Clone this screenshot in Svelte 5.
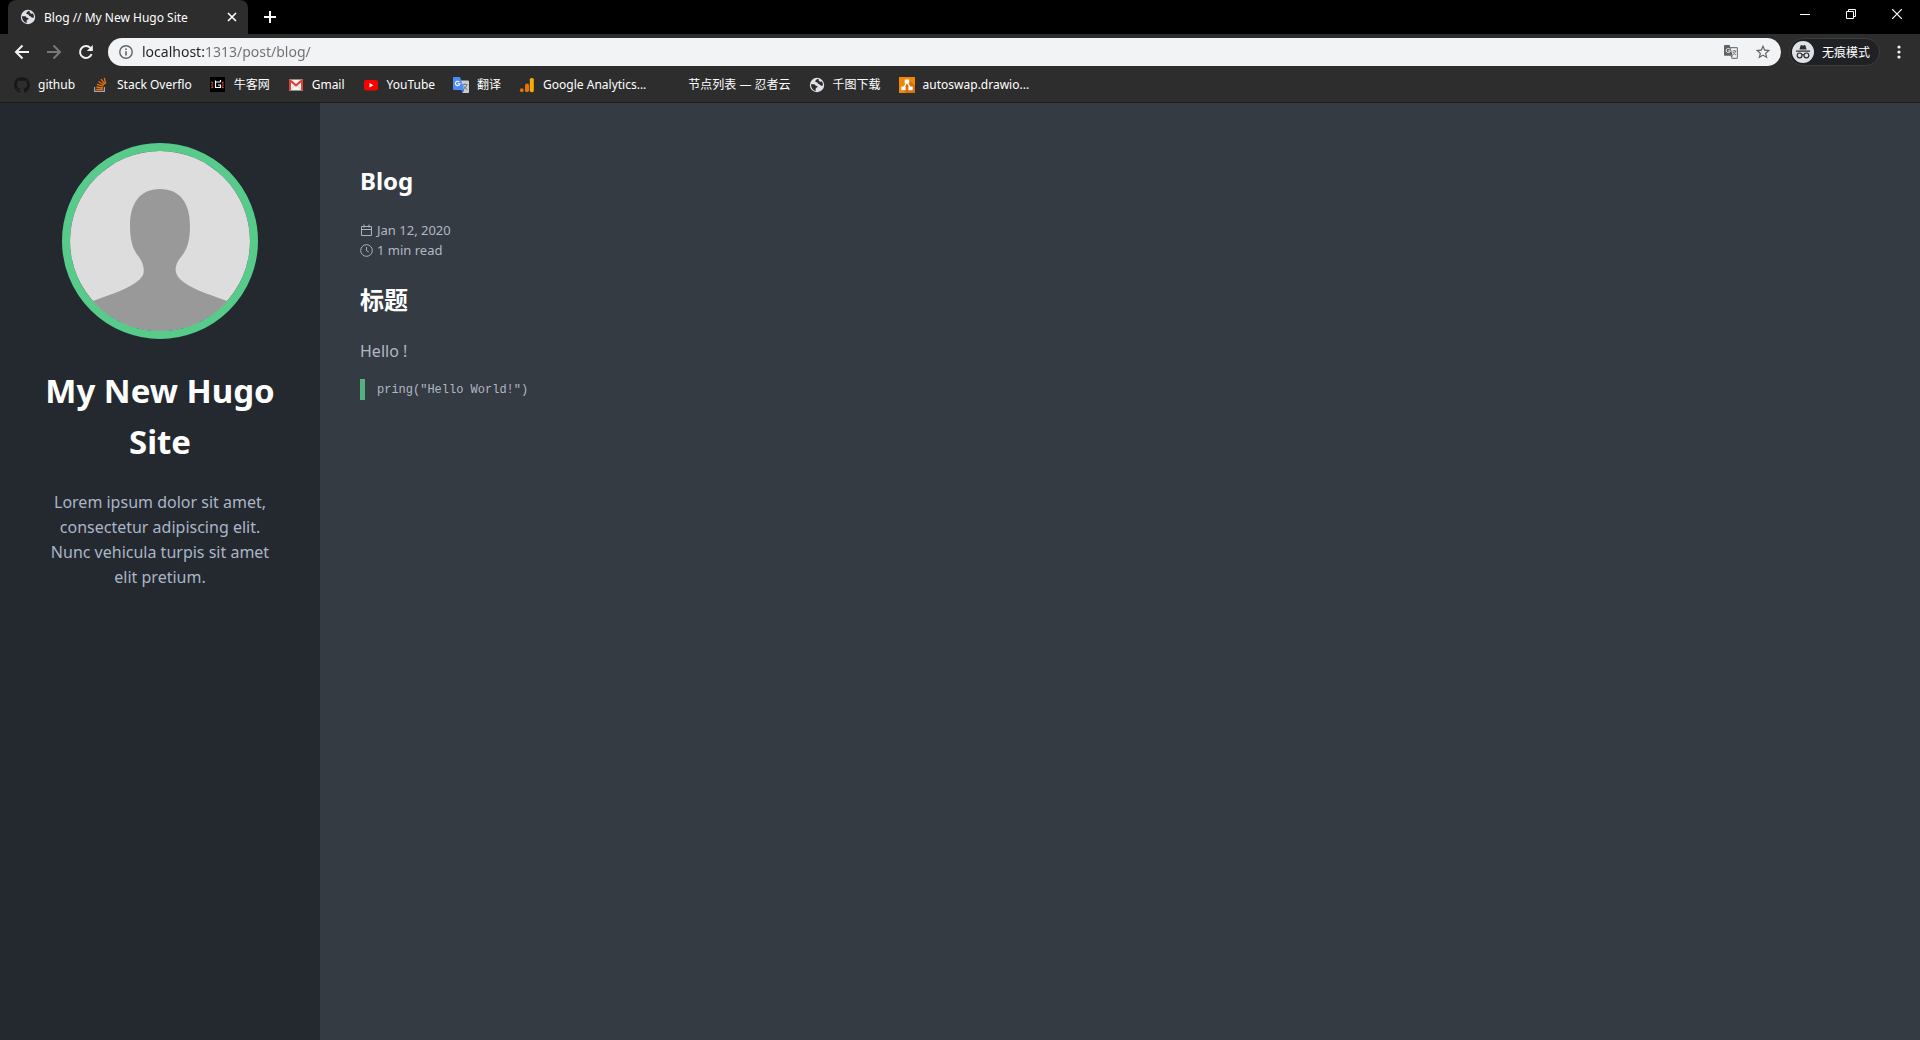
<script lang="ts">
  type Bookmark = { icon: string; label: string };

  const bookmarks: Bookmark[] = [
    { icon: 'github', label: 'github' },
    { icon: 'stack', label: 'Stack Overflo' },
    { icon: 'nowcoder', label: '牛客网' },
    { icon: 'gmail', label: 'Gmail' },
    { icon: 'youtube', label: 'YouTube' },
    { icon: 'translate', label: '翻译' },
    { icon: 'analytics', label: 'Google Analytics...' },
    { icon: 'blank', label: '节点列表 — 忍者云' },
    { icon: 'globe', label: '千图下载' },
    { icon: 'drawio', label: 'autoswap.drawio...' },
  ];

  let url = 'localhost:1313/post/blog/';
</script>

<div class="browser">
  <!-- Tab strip -->
  <div class="tab-strip">
    <div class="tab">
      <svg class="globe" width="16" height="16" viewBox="0 0 16 16">
        <circle cx="8" cy="8" r="7.2" fill="#dee1e6" />
        <path d="M1.8 7.3 L5.6 7.3 Q6.3 9.3 8.3 9 L8.6 10.2 Q6.6 10.6 6.7 11.6 L6.7 14 Q2.4 13 1.8 7.3Z M8.3 2 Q6.2 3.2 6.2 4.6 Q7 5.6 8.2 5.2 Q9 7 10.4 7.3 Q11 9 14 8.6 Q14 6 12.8 4.3 Q11.6 5.4 10.5 4.2 Q9.4 4.1 9.8 2.2Z" fill="#2d2d2d" />
      </svg>
      <span class="tab-title">Blog // My New Hugo Site</span>
      <button class="plain tab-close" aria-label="Close tab">
        <svg width="10" height="10" viewBox="0 0 10 10" stroke="#fff" stroke-width="1.6">
          <path d="M1 1 L9 9 M9 1 L1 9" />
        </svg>
      </button>
    </div>
    <button class="plain new-tab" aria-label="New tab">
      <svg width="12" height="12" viewBox="0 0 12 12" stroke="#fff" stroke-width="2">
        <path d="M6 0 V12 M0 6 H12" />
      </svg>
    </button>
    <div class="window-controls">
      <button class="plain" aria-label="Minimize">
        <svg width="10" height="10" viewBox="0 0 10 10" stroke="#fff"><path d="M0 5.5 H10" /></svg>
      </button>
      <button class="plain" aria-label="Restore">
        <svg width="10" height="10" viewBox="0 0 10 10" fill="none" stroke="#fff">
          <path d="M0.5 2.5 H7.5 V9.5 H0.5Z M2.5 2.5 V0.5 H9.5 V7.5 H7.5" />
        </svg>
      </button>
      <button class="plain" aria-label="Close">
        <svg width="10" height="10" viewBox="0 0 10 10" stroke="#fff" stroke-width="1.2">
          <path d="M0 0 L10 10 M10 0 L0 10" />
        </svg>
      </button>
    </div>
  </div>

  <!-- Toolbar -->
  <div class="toolbar">
    <button class="plain nav" aria-label="Back">
      <svg width="16" height="16" viewBox="0 0 16 16" fill="none" stroke="#f1f3f4" stroke-width="2">
        <path d="M15 8 H2.5 M8.5 1.5 L2 8 L8.5 14.5" />
      </svg>
    </button>
    <button class="plain nav" aria-label="Forward">
      <svg width="16" height="16" viewBox="0 0 16 16" fill="none" stroke="#77787a" stroke-width="2">
        <path d="M1 8 H13.5 M7.5 1.5 L14 8 L7.5 14.5" />
      </svg>
    </button>
    <button class="plain nav" aria-label="Reload">
      <svg width="16" height="16" viewBox="0 0 16 16" fill="none" stroke="#f1f3f4" stroke-width="2">
        <path d="M13.6 10.2 A6 6 0 1 1 12.4 3.9" />
        <path d="M14.8 1 V7 H8.8Z" fill="#f1f3f4" stroke="none" />
      </svg>
    </button>

    <div class="omnibox">
      <svg width="14" height="14" viewBox="0 0 14 14" fill="none" stroke="#5f6368" stroke-width="1.4">
        <circle cx="7" cy="7" r="6.2" />
        <path d="M7 6.2 V10.5 M7 3.4 V5" stroke-width="1.6" />
      </svg>
      <input class="url" type="text" aria-label="Address" spellcheck="false" bind:value={url} />
      <button class="plain" aria-label="Translate this page">
        <svg width="14" height="14" viewBox="0 0 14 14">
          <path d="M6 2.6 H12.8 Q13.4 2.6 13.4 3.2 V12.8 Q13.4 13.4 12.8 13.4 H7.6" fill="none" stroke="#777a7e" stroke-width="1.1" />
          <path d="M1 0 H5.6 L8.8 10.8 H1 Q0 10.8 0 9.8 V1 Q0 0 1 0Z" fill="#5f6368" />
          <path d="M6 4.4 A2.1 2.1 0 1 0 6.3 5.9 H4.2" fill="none" stroke="#f1f3f4" stroke-width="1" />
          <path d="M8.4 6 H12.4 M10.3 5 V6 M11.8 6 Q11 8.8 8.8 9.8 M9 7 Q10 9 12 10" fill="none" stroke="#777a7e" />
          <path d="M6.6 10.8 H8.8 L7.4 13.2Z" fill="#5f6368" />
        </svg>
      </button>
      <button class="plain" aria-label="Bookmark this page">
        <svg width="16" height="16" viewBox="1 1 22 22" fill="#5f6368">
          <path d="M22 9.24l-7.19-.62L12 2 9.19 8.63 2 9.24l5.46 4.73L5.82 21 12 17.27 18.18 21l-1.63-7.03L22 9.24zM12 15.4l-3.76 2.27 1-4.28-3.32-2.88 4.38-.38L12 6.1l1.71 4.04 4.38.38-3.32 2.88 1 4.28L12 15.4z" />
        </svg>
      </button>
    </div>

    <button class="plain incognito">
      <svg width="22" height="22" viewBox="0 0 22 22">
        <circle cx="11" cy="11" r="11" fill="#dee1e6" />
        <path d="M7.4 8.4 L8.6 4.4 Q9 3.8 9.8 4.3 Q11 4.8 12.2 4.3 Q13 3.8 13.4 4.4 L14.6 8.4Z M4 9.4 H18 V10.8 H4Z" fill="#2d2d2d" />
        <g fill="none" stroke="#2d2d2d" stroke-width="1.2">
          <circle cx="7.6" cy="14.4" r="2.4" />
          <circle cx="14.4" cy="14.4" r="2.4" />
          <path d="M10 14 Q11 13.3 12 14" />
        </g>
      </svg>
      <span>无痕模式</span>
    </button>
    <button class="plain menu" aria-label="Menu">
      <svg width="4" height="14" viewBox="0 0 4 14" fill="#f1f3f4">
        <circle cx="2" cy="2" r="1.6" />
        <circle cx="2" cy="7" r="1.6" />
        <circle cx="2" cy="12" r="1.6" />
      </svg>
    </button>
  </div>

  <!-- Bookmarks -->
  <nav class="bookmarks">
    {#each bookmarks as bookmark}
      <a class="bookmark" href="#{bookmark.icon}">
        <svg width="16" height="16" viewBox="0 0 16 16">
          {#if bookmark.icon === 'github'}
            <path fill="#181818" d="M8 0C3.58 0 0 3.58 0 8c0 3.54 2.29 6.53 5.47 7.59.4.07.55-.17.55-.38 0-.19-.01-.82-.01-1.49-2.01.37-2.53-.49-2.69-.94-.09-.23-.48-.94-.82-1.13-.28-.15-.68-.52-.01-.53.63-.01 1.08.58 1.23.82.72 1.21 1.87.87 2.33.66.07-.52.28-.87.51-1.07-1.78-.2-3.64-.89-3.64-3.95 0-.87.31-1.59.82-2.15-.08-.2-.36-1.02.08-2.12 0 0 .67-.21 2.2.82.64-.18 1.32-.27 2-.27s1.36.09 2 .27c1.53-1.04 2.2-.82 2.2-.82.44 1.1.16 1.92.08 2.12.51.56.82 1.27.82 2.15 0 3.07-1.87 3.75-3.65 3.95.29.25.54.73.54 1.48 0 1.07-.01 1.93-.01 2.2 0 .21.15.46.55.38A8.01 8.01 0 0 0 16 8c0-4.42-3.58-8-8-8z" />
          {:else if bookmark.icon === 'stack'}
            <path d="M1.6 10 V14.4 H11.4 V10" fill="none" stroke="#a5a5a5" stroke-width="1.2" />
            <path d="M3.2 12.5 H9.8 M3.4 10 L9.9 11 M4 7.3 L10.3 9.2 M5.5 4.5 L11 8 M8 2.2 L11.8 7.2 M11.4 1 L12.6 6.8" stroke="#e8710f" stroke-width="1.3" />
          {:else if bookmark.icon === 'nowcoder'}
            <path d="M0 0 H15 V15 H0Z" fill="#000" />
            <path d="M10.4 5 H5.5 V10.5 H10.5 V8 H8 M5.5 3.5 V5 M10.5 3 V5" fill="none" stroke="#fff" stroke-width="1.2" />
            <path d="M1.5 5 L3 6.5 M1 8 H3 M1.5 11 L3 9.5 M13.5 5 L12 6.5 M14 8 H12 M13.5 11 L12 9.5" stroke="#e0523c" stroke-width="1.2" />
          {:else if bookmark.icon === 'gmail'}
            <path d="M1 2.5 H15 V13.5 H1Z" fill="#f2f2f2" />
            <path d="M3 13 L6.5 8 M13 13 L9.5 8" stroke="#d3d3d3" />
            <path d="M1 13.5 V2.5 H2.8 L8 7 L13.2 2.5 H15 V13.5 H13 V5.5 L8 9.7 L3 5.5 V13.5Z" fill="#db4437" />
          {:else if bookmark.icon === 'youtube'}
            <rect x="1" y="3" width="14" height="10.4" rx="2.4" fill="#f00" />
            <path d="M6.5 6 V10.4 L10.4 8.2Z" fill="#fff" />
          {:else if bookmark.icon === 'translate'}
            <path d="M6 3.4 H15 Q16 3.4 16 4.4 V15 Q16 16 15 16 H9.5Z" fill="#c9cdd2" />
            <path d="M9.5 7.5 H14.5 M12 6.3 V7.5 M14 7.5 Q13 11 10.5 12 M10.4 8.5 Q11.8 11.5 14.4 12.6" fill="none" stroke="#777c82" />
            <path d="M1 0 H7 L11.3 13 H1 Q0 13 0 12 V1 Q0 0 1 0Z" fill="#4c8bf5" />
            <path d="M8 13 H11.3 L9.5 16Z" fill="#3367d6" />
            <path d="M6.3 5 A2.2 2.2 0 1 0 6.8 6.8 H4.6" fill="none" stroke="#fff" stroke-width="1.1" />
          {:else if bookmark.icon === 'analytics'}
            <circle cx="2.8" cy="13.2" r="1.9" fill="#e37400" />
            <rect x="6" y="6.4" width="4" height="8.8" rx="2" fill="#e8710a" />
            <rect x="10.8" y="1" width="4" height="14.2" rx="1.6" fill="#f9ab00" />
          {:else if bookmark.icon === 'globe'}
            <circle cx="8" cy="8" r="7.2" fill="#dee1e6" />
            <path d="M1.8 7.3 L5.6 7.3 Q6.3 9.3 8.3 9 L8.6 10.2 Q6.6 10.6 6.7 11.6 L6.7 14 Q2.4 13 1.8 7.3Z M8.3 2 Q6.2 3.2 6.2 4.6 Q7 5.6 8.2 5.2 Q9 7 10.4 7.3 Q11 9 14 8.6 Q14 6 12.8 4.3 Q11.6 5.4 10.5 4.2 Q9.4 4.1 9.8 2.2Z" fill="#2d2d2d" />
          {:else if bookmark.icon === 'drawio'}
            <path d="M0 0 H16 V16 H0Z" fill="#f08705" />
            <path d="M10 3 L16 9 V16 H7 L3 13Z" fill="#d9700a" />
            <path d="M8 5 L4.5 11 M8 5 L11.5 11" stroke="#fff" stroke-width="1.4" />
            <path d="M5.7 2.4 H10.3 V6.2 H5.7Z M2.3 9.4 H6.6 V13.2 H2.3Z M9.4 9.4 H13.7 V13.2 H9.4Z" fill="#fff" />
          {/if}
        </svg>
        <span>{bookmark.label}</span>
      </a>
    {/each}
  </nav>

  <!-- Page -->
  <div class="page">
    <aside class="sidebar">
      <svg class="avatar" viewBox="0 0 180 180" role="img" aria-label="Avatar">
        <path d="M0 0 H180 V180 H0Z" fill="#ddd" />
        <path d="M90 38 C110 38 120 52 120 75 C120 92 116 100 111 106 C106 112 104 118 107 124 C113 135 135 142 157 150 L180 160 V180 H0 V160 L23 150 C45 142 67 135 73 124 C75 118 73 112 69 106 C64 100 60 92 60 75 C60 52 70 38 90 38Z" fill="#999" />
      </svg>
      <h1>My New Hugo Site</h1>
      <p>Lorem ipsum dolor sit amet, consectetur adipiscing elit. Nunc vehicula turpis sit amet elit pretium.</p>
    </aside>

    <main class="content">
      <h2>Blog</h2>
      <div class="meta">
        <div class="meta-row">
          <svg width="13" height="13" viewBox="0 0 13 13" fill="none" stroke="#acb3be">
            <path d="M1.5 2.5 H11.5 V11.5 H1.5Z M1 5.5 H12 M4 0.5 V3.5 M9 0.5 V3.5" />
          </svg>
          <time datetime="2020-01-12">Jan 12, 2020</time>
        </div>
        <div class="meta-row">
          <svg width="13" height="13" viewBox="0 0 13 13" fill="none" stroke="#acb3be">
            <circle cx="6.5" cy="6.5" r="5.8" />
            <path d="M6.5 3 V6.7 L8.8 8" />
          </svg>
          <span>1 min read</span>
        </div>
      </div>
      <h2>标题</h2>
      <p>Hello !</p>
      <pre><code>pring("Hello World!")</code></pre>
    </main>
  </div>
</div>

<style>
  :global(body) {
    margin: 0;
    background: #353b43;
  }

  .browser {
    display: flex;
    flex-direction: column;
    min-height: 100vh;
    font-family: 'Noto Sans', 'Noto Sans CJK SC', sans-serif;
  }

  .plain {
    display: flex;
    align-items: center;
    justify-content: center;
    padding: 0;
    border: none;
    background: none;
    font-family: inherit;
    cursor: pointer;
  }

  svg {
    display: block;
    flex-shrink: 0;
  }

  .tab-strip {
    display: flex;
    height: 34px;
    padding-left: 8px;
    background: #000;
  }

  .tab {
    display: flex;
    align-items: center;
    box-sizing: border-box;
    width: 240px;
    padding: 0 11px 0 12px;
    gap: 8px;
    border-radius: 8px 8px 0 0;
    background: #2d2d2d;
    color: #fff;
    font-size: 12px;
  }

  .tab-title {
    flex: 1;
    white-space: nowrap;
  }

  .tab-close {
    width: 10px;
    height: 16px;
  }

  .new-tab {
    width: 44px;
  }

  .window-controls {
    display: flex;
    height: 28px;
    margin-left: auto;
  }

  .window-controls button {
    width: 46px;
  }

  .toolbar {
    display: flex;
    align-items: center;
    height: 36px;
    padding-left: 6px;
    background: #2d2d2d;
  }

  .nav {
    width: 32px;
    height: 28px;
  }

  .omnibox {
    display: flex;
    flex: 1;
    align-items: center;
    height: 28px;
    margin-left: 6px;
    padding: 0 10px 0 11px;
    border-radius: 14px;
    background: #f1f3f4;
    gap: 17px;
  }

  /* host name is darker than the rest of the address */
  .url {
    flex: 1;
    min-width: 0;
    margin-left: -8px;
    padding: 0;
    border: none;
    outline: none;
    background: linear-gradient(to right, #202124 62px, #6c7075 62px);
    background-clip: text;
    color: transparent;
    caret-color: #202124;
    font-family: inherit;
    font-size: 14px;
    line-height: 20px;
  }

  .incognito {
    height: 28px;
    box-sizing: border-box;
    margin-left: 8px;
    padding: 0 9px 0 2px;
    gap: 8px;
    border: 1px solid #3c3d3f;
    border-radius: 14px;
    background: #202124;
    color: #fff;
    font-size: 12px;
  }

  .menu {
    width: 40px;
    height: 28px;
    padding-right: 2px;
  }

  .bookmarks {
    display: flex;
    align-items: center;
    box-sizing: border-box;
    height: 33px;
    padding: 0 0 2px 14px;
    gap: 18px;
    border-bottom: 1px solid #1c1c1c;
    background: #2d2d2d;
  }

  .bookmark {
    display: flex;
    align-items: center;
    gap: 8px;
    color: #fff;
    font-size: 12px;
    line-height: 16px;
    text-decoration: none;
    white-space: nowrap;
  }

  .page {
    display: flex;
    flex: 1;
    color: #b0b8c4;
  }

  .sidebar {
    box-sizing: border-box;
    width: 320px;
    flex-shrink: 0;
    padding: 40px;
    background: #24292f;
    text-align: center;
  }

  .avatar {
    width: 180px;
    height: 180px;
    margin: 0 auto;
    border: 8px solid #57cc8a;
    border-radius: 50%;
  }

  h1 {
    margin: 26px 0 23px;
    color: #fff;
    font-size: 33px;
    line-height: 51px;
  }

  p {
    margin: 0;
    font-size: 16px;
    line-height: 25px;
  }

  .sidebar p {
    color: #a9b6c8;
  }

  .content {
    flex: 1;
    padding: 58px 40px 40px;
  }

  h2 {
    margin: 0 0 19px;
    color: #fff;
    font-size: 24px;
    line-height: 40px;
  }

  .meta {
    margin-bottom: 20px;
    font-size: 13px;
    line-height: 20px;
  }

  .meta-row {
    display: flex;
    align-items: center;
    gap: 4px;
  }

  pre {
    margin: 15px 0 0;
    padding-left: 12px;
    border-left: 5px solid #54b07e;
    font-size: 12px;
    line-height: 20px;
  }

  code {
    font-family: 'Liberation Mono', monospace;
  }
</style>
